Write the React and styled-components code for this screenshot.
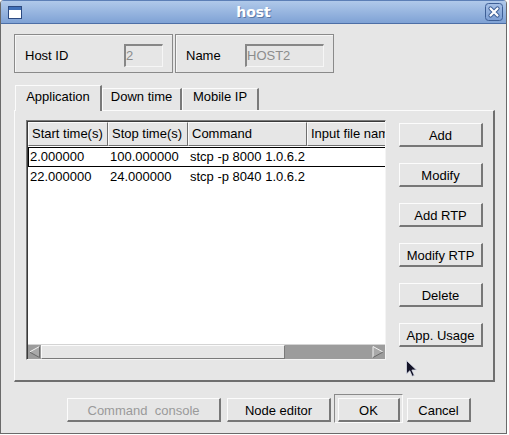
import React from "react";
import styled, { createGlobalStyle } from "styled-components";

const GlobalStyle = createGlobalStyle`
  html, body { margin: 0; padding: 0; background: #ffffff; }
  body { font-family: "Liberation Sans", Arial, sans-serif; font-size: 13px; color: #000; }
  * { box-sizing: border-box; }
`;

const Window = styled.div`
  position: relative;
  width: 507px;
  height: 434px;
  background: #e6e6e6;
  border: 1px solid #6a6a6a;
  border-top: none;
  border-radius: 4px 4px 0 0;
  display: flex;
  flex-direction: column;
  overflow: hidden;
`;

const TitleBar = styled.div`
  height: 24px;
  flex: none;
  display: flex;
  align-items: center;
  padding: 0 3px 0 7px;
  background: linear-gradient(#b0c9ea, #7fa2d5);
  border-top: 1px solid #5c7fb6;
  border-bottom: 1px solid #4d6fa6;
`;

const Title = styled.div`
  flex: 1;
  text-align: center;
  font-family: "DejaVu Sans", sans-serif;
  font-weight: bold;
  font-size: 14px;
  color: #fff;
  text-shadow: 1px 1px 0 rgba(50, 75, 120, 0.55);
  line-height: 20px;
`;

const Content = styled.div`
  flex: 1;
  display: flex;
  flex-direction: column;
  padding: 10px 0 0 13px;
`;

const HeaderRow = styled.div`
  display: flex;
  gap: 2px;
`;

const GroupBox = styled.div`
  width: 159px;
  height: 39px;
  border: 1px solid #8a8a8a;
  box-shadow: inset 1px 1px 0 #f6f6f6;
  display: flex;
  align-items: center;
  justify-content: space-between;
  padding: 8px 9px 4px 9px;
`;

const Label = styled.span`
  line-height: 15px;
  padding-left: 1px;
`;

const Entry = styled.div`
  width: ${(p) => p.$w}px;
  height: 23px;
  border-style: solid;
  border-width: 2px 1px 1px 2px;
  border-color: #878787 #f6f6f6 #f6f6f6 #878787;
  color: #8c8c8c;
  line-height: 19px;
  padding-left: 0px;
  background: #e6e6e6;
`;

const TabBar = styled.div`
  display: flex;
  align-items: flex-end;
  height: 25px;
  margin-top: 12px;
  padding-left: 1px;
`;

const Tab = styled.div`
  position: relative;
  z-index: 1;
  width: ${(p) => p.$w}px;
  height: ${(p) => (p.$active ? 26 : 22)}px;
  margin-bottom: ${(p) => (p.$active ? -1 : 0)}px;
  padding-top: ${(p) => (p.$active ? 3 : 0)}px;
  background: #e6e6e6;
  border-top: 1px solid #fbfbfb;
  border-left: 1px solid #fbfbfb;
  border-right: 2px solid #7a7a7a;
  text-align: center;
  line-height: 16px;
`;

const Panel = styled.div`
  width: 481px;
  height: 272px;
  border-style: solid;
  border-width: 1px 2px 2px 1px;
  border-color: #fbfbfb #6f6f6f #6f6f6f #fbfbfb;
  display: flex;
  align-items: flex-start;
  padding: 9px 0 0 11px;
  position: relative;
`;

const TableBox = styled.div`
  width: 360px;
  height: 240px;
  border-style: solid;
  border-width: 1px;
  border-color: #7a7a7a #f4f4f4 #f4f4f4 #7a7a7a;
  box-shadow: inset 1px 1px 0 #3a3a3a;
  padding: 1px 0 0 1px;
  background: #fff;
  display: flex;
  flex-direction: column;
  overflow: hidden;
`;

const HeadRow = styled.div`
  display: grid;
  grid-template-columns: 80px 80px 119px 140px;
  height: 24px;
  background: #e6e6e6;
  flex: none;
`;

const HeadCell = styled.div`
  border-style: solid;
  border-width: 1px 1px 1px 1px;
  border-color: #fbfbfb #6f6f6f #6f6f6f #fbfbfb;
  padding-left: 3px;
  line-height: 21px;
  white-space: nowrap;
  overflow: hidden;
`;

const BodyArea = styled.div`
  flex: 1;
  padding-top: 1px;
  background: #fff;
  overflow: hidden;
`;

const Row = styled.div`
  display: grid;
  grid-template-columns: 79px 80px 119px 140px;
  height: 20px;
  border-style: solid;
  border-width: 1px 0 1px 1px;
  border-color: ${(p) => (p.$selected ? "#000" : "transparent")};
  line-height: 18px;
`;

const Cell = styled.div`
  padding-left: ${(p) => (p.$first ? 1 : 2)}px;
  white-space: nowrap;
  overflow: hidden;
`;

const ScrollBar = styled.div`
  flex: none;
  height: 15px;
  display: flex;
  background: #9c9c9c;
  border-top: 1px solid #d4d4d4;
`;

const Thumb = styled.div`
  width: 244px;
  border-style: solid;
  border-width: 1px;
  border-color: #fbfbfb #7a7a7a #7a7a7a #fbfbfb;
  background: #e6e6e6;
`;

const Trough = styled.div`
  flex: 1;
`;

const ArrowBox = styled.svg`
  flex: none;
  display: block;
`;

const ButtonColumn = styled.div`
  display: flex;
  flex-direction: column;
  gap: 16px;
  margin: 3px 0 0 13px;
`;

const Button = styled.button`
  width: ${(p) => p.$w}px;
  height: 24px;
  margin: 0;
  padding: 1px 0 0 0;
  font: 13px "Liberation Sans", Arial, sans-serif;
  color: ${(p) => (p.disabled ? "#9a9a9a" : "#000")};
  background: #e6e6e6;
  border-style: solid;
  border-width: 1px 2px 2px 1px;
  border-color: #fcfcfc #777 #777 #fcfcfc;
  white-space: pre;
  flex: none;
`;

const BottomBar = styled.div`
  display: flex;
  align-items: flex-start;
  margin-top: 12px;
  padding-left: 53px;
`;

const BottomButton = styled(Button)`
  margin-top: 4px;
  margin-right: ${(p) => p.$gap}px;
`;

const DefaultFrame = styled.div`
  height: 29px;
  border-style: solid;
  border-width: 1px;
  border-color: #8a8a8a #fbfbfb #fbfbfb #8a8a8a;
  padding: 3px 2px 0 3px;
  margin-right: 4px;
`;

const Cursor = styled.svg`
  position: absolute;
  left: 391px;
  top: 249px;
`;

const WindowIcon = () => (
  <svg width="14" height="13" viewBox="0 0 14 13">
    <rect x="0.5" y="0.5" width="13" height="12" fill="#fff" stroke="#2c4a80" />
    <rect x="1" y="1" width="12" height="3" fill="#3f6fb8" />
  </svg>
);

const CloseIcon = () => (
  <svg width="18" height="18" viewBox="0 0 18 18">
    <defs>
      <linearGradient id="cg" x1="0" y1="0" x2="0" y2="1">
        <stop offset="0" stopColor="#a6c0e6" />
        <stop offset="1" stopColor="#7c9ed3" />
      </linearGradient>
    </defs>
    <rect x="0.5" y="0.5" width="17" height="17" rx="3" fill="url(#cg)" stroke="#3e5f96" />
    <path d="M5.5 5.5 L12.5 12.5 M12.5 5.5 L5.5 12.5" stroke="#3e5f96" strokeWidth="4.2" strokeLinecap="round" />
    <path d="M5.5 5.5 L12.5 12.5 M12.5 5.5 L5.5 12.5" stroke="#fff" strokeWidth="2.2" strokeLinecap="round" />
  </svg>
);

const LeftArrow = () => (
  <ArrowBox width="13" height="14" viewBox="0 0 13 14">
    <rect width="13" height="14" fill="#9c9c9c" />
    <polygon points="1.5,7 11.5,1.5 11.5,12.5" fill="#a9a9a9" />
    <polyline points="11.5,1.5 1.5,7" fill="none" stroke="#f2f2f2" strokeWidth="1" />
    <polyline points="1.5,7 11.5,12.5 11.5,1.5" fill="none" stroke="#6a6a6a" strokeWidth="1" />
  </ArrowBox>
);

const RightArrow = () => (
  <ArrowBox width="14" height="14" viewBox="0 0 14 14">
    <rect width="14" height="14" fill="#9c9c9c" />
    <polygon points="12,7 2,1.5 2,12.5" fill="#a9a9a9" />
    <polyline points="2,12.5 2,1.5 12,7" fill="none" stroke="#f2f2f2" strokeWidth="1" />
    <polyline points="12,7 2,12.5" fill="none" stroke="#6a6a6a" strokeWidth="1" />
  </ArrowBox>
);

const columns = ["Start time(s)", "Stop time(s)", "Command", "Input file name"];
const rows = [
  ["2.000000", "100.000000", "stcp -p 8000 1.0.6.2", ""],
  ["22.000000", "24.000000", "stcp -p 8040 1.0.6.2", ""],
];
const sideButtons = ["Add", "Modify", "Add RTP", "Modify RTP", "Delete", "App. Usage"];

export default function App() {
  return (
    <>
      <GlobalStyle />
      <Window>
        <TitleBar>
          <WindowIcon />
          <Title>host</Title>
          <CloseIcon />
        </TitleBar>
        <Content>
          <HeaderRow>
            <GroupBox>
              <Label>Host ID</Label>
              <Entry $w={39}>2</Entry>
            </GroupBox>
            <GroupBox>
              <Label>Name</Label>
              <Entry $w={79}>HOST2</Entry>
            </GroupBox>
          </HeaderRow>
          <TabBar>
            <Tab $active $w={87}>Application</Tab>
            <Tab $w={80}>Down time</Tab>
            <Tab $w={77}>Mobile IP</Tab>
          </TabBar>
          <Panel>
            <TableBox>
              <HeadRow>
                {columns.map((c) => (
                  <HeadCell key={c}>{c}</HeadCell>
                ))}
              </HeadRow>
              <BodyArea>
                {rows.map((r, i) => (
                  <Row key={i} $selected={i === 0}>
                    {r.map((v, j) => (
                      <Cell key={j} $first={j === 0}>{v}</Cell>
                    ))}
                  </Row>
                ))}
              </BodyArea>
              <ScrollBar>
                <LeftArrow />
                <Thumb />
                <Trough />
                <RightArrow />
              </ScrollBar>
            </TableBox>
            <ButtonColumn>
              {sideButtons.map((b) => (
                <Button key={b} $w={84}>{b}</Button>
              ))}
            </ButtonColumn>
            <Cursor width="12" height="18" viewBox="0 0 12 18">
              <path d="M0.5 0.5 L0.5 14 L3.8 10.8 L6.2 16.3 L8.3 15.4 L5.9 10 L10.5 10 Z" fill="#141428" stroke="#d8dce8" strokeWidth="0.8" />
            </Cursor>
          </Panel>
          <BottomBar>
            <BottomButton $w={154} $gap={6} disabled>Command  console</BottomButton>
            <BottomButton $w={104} $gap={3}>Node editor</BottomButton>
            <DefaultFrame>
              <Button $w={62}>OK</Button>
            </DefaultFrame>
            <BottomButton $w={64} $gap={0}>Cancel</BottomButton>
          </BottomBar>
        </Content>
      </Window>
    </>
  );
}
